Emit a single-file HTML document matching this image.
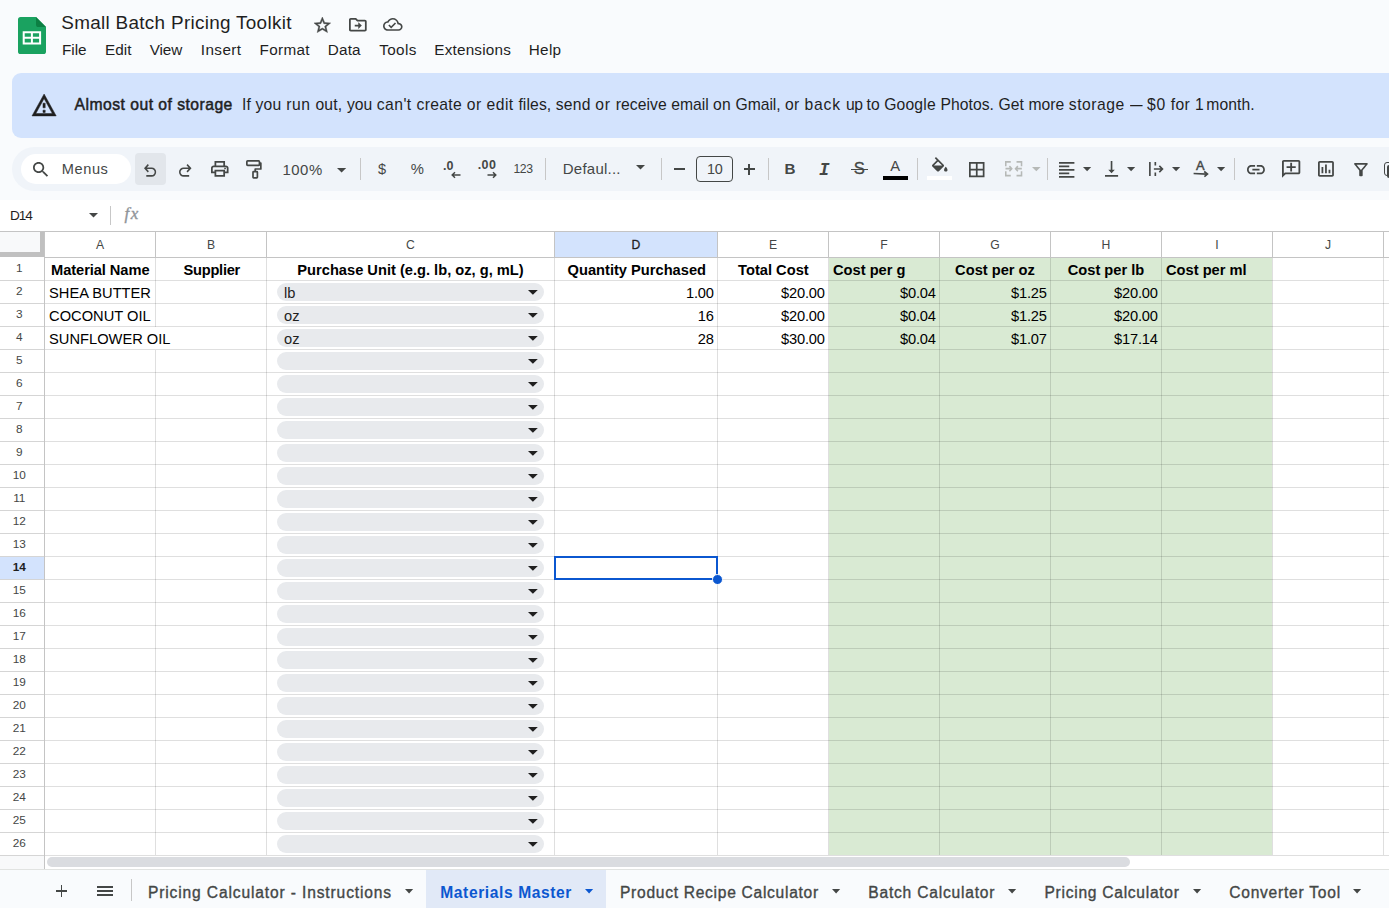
<!DOCTYPE html>
<html lang="en"><head><meta charset="utf-8"><title>Small Batch Pricing Toolkit</title>
<style>
html,body{margin:0;padding:0}
body{width:1389px;height:908px;overflow:hidden;position:relative;background:#f9fbfd;font-family:'Liberation Sans', sans-serif}
.b{position:absolute}
.t{position:absolute;white-space:pre;line-height:1}
.i{position:absolute;overflow:visible}
</style></head><body>
<div class="b" style="left:12px;top:73px;width:1400px;height:65px;background:#d3e3fd;border-radius:9px 0 0 9px;"></div>
<div class="b" style="left:12px;top:147px;width:1400px;height:44px;background:#f0f4f9;border-radius:22px 0 0 22px;"></div>
<div class="b" style="left:21px;top:154px;width:110px;height:30px;background:#fff;border-radius:15px;"></div>
<div class="b" style="left:135px;top:153px;width:31px;height:32px;background:#e2e6eb;border-radius:4px;"></div>
<div class="b" style="left:360px;top:158px;width:1px;height:22px;background:#c7c7c7;"></div>
<div class="b" style="left:545px;top:158px;width:1px;height:22px;background:#c7c7c7;"></div>
<div class="b" style="left:661px;top:158px;width:1px;height:22px;background:#c7c7c7;"></div>
<div class="b" style="left:768px;top:158px;width:1px;height:22px;background:#c7c7c7;"></div>
<div class="b" style="left:917px;top:158px;width:1px;height:22px;background:#c7c7c7;"></div>
<div class="b" style="left:1047px;top:158px;width:1px;height:22px;background:#c7c7c7;"></div>
<div class="b" style="left:1234px;top:158px;width:1px;height:22px;background:#c7c7c7;"></div>
<div class="b" style="left:696px;top:156px;width:37px;height:26px;background:transparent;border:1px solid #444746;border-radius:4px;box-sizing:border-box;"></div>
<div class="b" style="left:883px;top:176px;width:25px;height:4px;background:#000;"></div>
<div class="b" style="left:927px;top:176px;width:25px;height:4px;background:#fff;"></div>
<div class="b" style="left:0px;top:200px;width:1389px;height:31px;background:#fff;"></div>
<div class="b" style="left:110px;top:206px;width:1px;height:19px;background:#c7c7c7;"></div>
<div class="b" style="left:0px;top:231px;width:1389px;height:638px;background:#fff;"></div>
<div class="b" style="left:829px;top:258px;width:443px;height:597px;background:#d9ead3;"></div>
<div class="b" style="left:555px;top:232px;width:162px;height:25px;background:#d3e3fd;"></div>
<div class="b" style="left:0px;top:557px;width:44px;height:22px;background:#d3e3fd;"></div>
<div class="b" style="left:0px;top:232px;width:40px;height:20px;background:#f8f9fa;"></div>
<div class="b" style="left:40px;top:232px;width:4px;height:25px;background:#c0c0c0;"></div>
<div class="b" style="left:0px;top:252px;width:44px;height:5px;background:#c0c0c0;"></div>
<div class="b" style="left:277px;top:283px;width:267px;height:18px;background:#e8eaed;border-radius:9px;"></div>
<div class="b" style="left:277px;top:306px;width:267px;height:18px;background:#e8eaed;border-radius:9px;"></div>
<div class="b" style="left:277px;top:329px;width:267px;height:18px;background:#e8eaed;border-radius:9px;"></div>
<div class="b" style="left:277px;top:352px;width:267px;height:18px;background:#e8eaed;border-radius:9px;"></div>
<div class="b" style="left:277px;top:375px;width:267px;height:18px;background:#e8eaed;border-radius:9px;"></div>
<div class="b" style="left:277px;top:398px;width:267px;height:18px;background:#e8eaed;border-radius:9px;"></div>
<div class="b" style="left:277px;top:421px;width:267px;height:18px;background:#e8eaed;border-radius:9px;"></div>
<div class="b" style="left:277px;top:444px;width:267px;height:18px;background:#e8eaed;border-radius:9px;"></div>
<div class="b" style="left:277px;top:467px;width:267px;height:18px;background:#e8eaed;border-radius:9px;"></div>
<div class="b" style="left:277px;top:490px;width:267px;height:18px;background:#e8eaed;border-radius:9px;"></div>
<div class="b" style="left:277px;top:513px;width:267px;height:18px;background:#e8eaed;border-radius:9px;"></div>
<div class="b" style="left:277px;top:536px;width:267px;height:18px;background:#e8eaed;border-radius:9px;"></div>
<div class="b" style="left:277px;top:559px;width:267px;height:18px;background:#e8eaed;border-radius:9px;"></div>
<div class="b" style="left:277px;top:582px;width:267px;height:18px;background:#e8eaed;border-radius:9px;"></div>
<div class="b" style="left:277px;top:605px;width:267px;height:18px;background:#e8eaed;border-radius:9px;"></div>
<div class="b" style="left:277px;top:628px;width:267px;height:18px;background:#e8eaed;border-radius:9px;"></div>
<div class="b" style="left:277px;top:651px;width:267px;height:18px;background:#e8eaed;border-radius:9px;"></div>
<div class="b" style="left:277px;top:674px;width:267px;height:18px;background:#e8eaed;border-radius:9px;"></div>
<div class="b" style="left:277px;top:697px;width:267px;height:18px;background:#e8eaed;border-radius:9px;"></div>
<div class="b" style="left:277px;top:720px;width:267px;height:18px;background:#e8eaed;border-radius:9px;"></div>
<div class="b" style="left:277px;top:743px;width:267px;height:18px;background:#e8eaed;border-radius:9px;"></div>
<div class="b" style="left:277px;top:766px;width:267px;height:18px;background:#e8eaed;border-radius:9px;"></div>
<div class="b" style="left:277px;top:789px;width:267px;height:18px;background:#e8eaed;border-radius:9px;"></div>
<div class="b" style="left:277px;top:812px;width:267px;height:18px;background:#e8eaed;border-radius:9px;"></div>
<div class="b" style="left:277px;top:835px;width:267px;height:18px;background:#e8eaed;border-radius:9px;"></div>
<div class="b" style="left:0px;top:231px;width:1389px;height:1px;background:#c4c4c4;"></div>
<div class="b" style="left:44px;top:257px;width:1345px;height:1px;background:#c4c4c4;"></div>
<div class="b" style="left:45px;top:280px;width:1344px;height:1px;background:rgba(0,0,0,.125);"></div>
<div class="b" style="left:0px;top:280px;width:44px;height:1px;background:#d5d5d5;"></div>
<div class="b" style="left:45px;top:303px;width:1344px;height:1px;background:rgba(0,0,0,.125);"></div>
<div class="b" style="left:0px;top:303px;width:44px;height:1px;background:#d5d5d5;"></div>
<div class="b" style="left:45px;top:326px;width:1344px;height:1px;background:rgba(0,0,0,.125);"></div>
<div class="b" style="left:0px;top:326px;width:44px;height:1px;background:#d5d5d5;"></div>
<div class="b" style="left:45px;top:349px;width:1344px;height:1px;background:rgba(0,0,0,.125);"></div>
<div class="b" style="left:0px;top:349px;width:44px;height:1px;background:#d5d5d5;"></div>
<div class="b" style="left:45px;top:372px;width:1344px;height:1px;background:rgba(0,0,0,.125);"></div>
<div class="b" style="left:0px;top:372px;width:44px;height:1px;background:#d5d5d5;"></div>
<div class="b" style="left:45px;top:395px;width:1344px;height:1px;background:rgba(0,0,0,.125);"></div>
<div class="b" style="left:0px;top:395px;width:44px;height:1px;background:#d5d5d5;"></div>
<div class="b" style="left:45px;top:418px;width:1344px;height:1px;background:rgba(0,0,0,.125);"></div>
<div class="b" style="left:0px;top:418px;width:44px;height:1px;background:#d5d5d5;"></div>
<div class="b" style="left:45px;top:441px;width:1344px;height:1px;background:rgba(0,0,0,.125);"></div>
<div class="b" style="left:0px;top:441px;width:44px;height:1px;background:#d5d5d5;"></div>
<div class="b" style="left:45px;top:464px;width:1344px;height:1px;background:rgba(0,0,0,.125);"></div>
<div class="b" style="left:0px;top:464px;width:44px;height:1px;background:#d5d5d5;"></div>
<div class="b" style="left:45px;top:487px;width:1344px;height:1px;background:rgba(0,0,0,.125);"></div>
<div class="b" style="left:0px;top:487px;width:44px;height:1px;background:#d5d5d5;"></div>
<div class="b" style="left:45px;top:510px;width:1344px;height:1px;background:rgba(0,0,0,.125);"></div>
<div class="b" style="left:0px;top:510px;width:44px;height:1px;background:#d5d5d5;"></div>
<div class="b" style="left:45px;top:533px;width:1344px;height:1px;background:rgba(0,0,0,.125);"></div>
<div class="b" style="left:0px;top:533px;width:44px;height:1px;background:#d5d5d5;"></div>
<div class="b" style="left:45px;top:556px;width:1344px;height:1px;background:rgba(0,0,0,.125);"></div>
<div class="b" style="left:0px;top:556px;width:44px;height:1px;background:#d5d5d5;"></div>
<div class="b" style="left:45px;top:579px;width:1344px;height:1px;background:rgba(0,0,0,.125);"></div>
<div class="b" style="left:0px;top:579px;width:44px;height:1px;background:#d5d5d5;"></div>
<div class="b" style="left:45px;top:602px;width:1344px;height:1px;background:rgba(0,0,0,.125);"></div>
<div class="b" style="left:0px;top:602px;width:44px;height:1px;background:#d5d5d5;"></div>
<div class="b" style="left:45px;top:625px;width:1344px;height:1px;background:rgba(0,0,0,.125);"></div>
<div class="b" style="left:0px;top:625px;width:44px;height:1px;background:#d5d5d5;"></div>
<div class="b" style="left:45px;top:648px;width:1344px;height:1px;background:rgba(0,0,0,.125);"></div>
<div class="b" style="left:0px;top:648px;width:44px;height:1px;background:#d5d5d5;"></div>
<div class="b" style="left:45px;top:671px;width:1344px;height:1px;background:rgba(0,0,0,.125);"></div>
<div class="b" style="left:0px;top:671px;width:44px;height:1px;background:#d5d5d5;"></div>
<div class="b" style="left:45px;top:694px;width:1344px;height:1px;background:rgba(0,0,0,.125);"></div>
<div class="b" style="left:0px;top:694px;width:44px;height:1px;background:#d5d5d5;"></div>
<div class="b" style="left:45px;top:717px;width:1344px;height:1px;background:rgba(0,0,0,.125);"></div>
<div class="b" style="left:0px;top:717px;width:44px;height:1px;background:#d5d5d5;"></div>
<div class="b" style="left:45px;top:740px;width:1344px;height:1px;background:rgba(0,0,0,.125);"></div>
<div class="b" style="left:0px;top:740px;width:44px;height:1px;background:#d5d5d5;"></div>
<div class="b" style="left:45px;top:763px;width:1344px;height:1px;background:rgba(0,0,0,.125);"></div>
<div class="b" style="left:0px;top:763px;width:44px;height:1px;background:#d5d5d5;"></div>
<div class="b" style="left:45px;top:786px;width:1344px;height:1px;background:rgba(0,0,0,.125);"></div>
<div class="b" style="left:0px;top:786px;width:44px;height:1px;background:#d5d5d5;"></div>
<div class="b" style="left:45px;top:809px;width:1344px;height:1px;background:rgba(0,0,0,.125);"></div>
<div class="b" style="left:0px;top:809px;width:44px;height:1px;background:#d5d5d5;"></div>
<div class="b" style="left:45px;top:832px;width:1344px;height:1px;background:rgba(0,0,0,.125);"></div>
<div class="b" style="left:0px;top:832px;width:44px;height:1px;background:#d5d5d5;"></div>
<div class="b" style="left:45px;top:855px;width:1344px;height:1px;background:rgba(0,0,0,.125);"></div>
<div class="b" style="left:0px;top:855px;width:44px;height:1px;background:#d5d5d5;"></div>
<div class="b" style="left:44px;top:232px;width:1px;height:25px;background:#c4c4c4;"></div>
<div class="b" style="left:44px;top:258px;width:1px;height:611px;background:#c4c4c4;"></div>
<div class="b" style="left:155px;top:232px;width:1px;height:25px;background:#c4c4c4;"></div>
<div class="b" style="left:155px;top:258px;width:1px;height:69px;background:rgba(0,0,0,.125);"></div>
<div class="b" style="left:155px;top:350px;width:1px;height:505px;background:rgba(0,0,0,.125);"></div>
<div class="b" style="left:266px;top:232px;width:1px;height:25px;background:#c4c4c4;"></div>
<div class="b" style="left:266px;top:258px;width:1px;height:597px;background:rgba(0,0,0,.125);"></div>
<div class="b" style="left:554px;top:232px;width:1px;height:25px;background:#c4c4c4;"></div>
<div class="b" style="left:554px;top:258px;width:1px;height:597px;background:rgba(0,0,0,.125);"></div>
<div class="b" style="left:717px;top:232px;width:1px;height:25px;background:#c4c4c4;"></div>
<div class="b" style="left:717px;top:258px;width:1px;height:597px;background:rgba(0,0,0,.125);"></div>
<div class="b" style="left:828px;top:232px;width:1px;height:25px;background:#c4c4c4;"></div>
<div class="b" style="left:828px;top:258px;width:1px;height:597px;background:rgba(0,0,0,.125);"></div>
<div class="b" style="left:939px;top:232px;width:1px;height:25px;background:#c4c4c4;"></div>
<div class="b" style="left:939px;top:258px;width:1px;height:597px;background:rgba(0,0,0,.125);"></div>
<div class="b" style="left:1050px;top:232px;width:1px;height:25px;background:#c4c4c4;"></div>
<div class="b" style="left:1050px;top:258px;width:1px;height:597px;background:rgba(0,0,0,.125);"></div>
<div class="b" style="left:1161px;top:232px;width:1px;height:25px;background:#c4c4c4;"></div>
<div class="b" style="left:1161px;top:258px;width:1px;height:597px;background:rgba(0,0,0,.125);"></div>
<div class="b" style="left:1272px;top:232px;width:1px;height:25px;background:#c4c4c4;"></div>
<div class="b" style="left:1272px;top:258px;width:1px;height:597px;background:rgba(0,0,0,.125);"></div>
<div class="b" style="left:1383px;top:232px;width:1px;height:25px;background:#c4c4c4;"></div>
<div class="b" style="left:1383px;top:258px;width:1px;height:597px;background:rgba(0,0,0,.125);"></div>
<div class="b" style="left:0px;top:856px;width:44px;height:13px;background:#f8f9fa;"></div>
<div class="b" style="left:47px;top:857.3px;width:1083.3px;height:9.3px;background:#dadce0;border-radius:5px;"></div>
<div class="b" style="left:0px;top:869px;width:1389px;height:39px;background:#f9fbfd;"></div>
<div class="b" style="left:0px;top:869px;width:1389px;height:1px;background:#e1e3e1;"></div>
<div class="b" style="left:426px;top:870px;width:180px;height:38px;background:#e1e9f7;"></div>
<div class="b" style="left:131px;top:879px;width:1px;height:22px;background:#c7c7c7;"></div>
<div class="b" style="left:554px;top:556px;width:164px;height:24px;background:transparent;border:2px solid #0b57d0;box-sizing:border-box;"></div>
<div class="b" style="left:713px;top:575px;width:9px;height:9px;background:#0b57d0;border-radius:50%;border:1px solid #fff;box-sizing:content-box;margin:-1px;"></div>
<svg class="i" style="left:18px;top:17px" width="28" height="37" viewBox="0 0 28 37">
<path d="M2.6 0H18L28 10V34.4a2.6 2.6 0 0 1-2.6 2.6H2.6A2.6 2.6 0 0 1 0 34.4V2.6A2.6 2.6 0 0 1 2.6 0z" fill="#1aa260"/>
<path d="M18 0L28 10H20.6A2.6 2.6 0 0 1 18 7.4z" fill="#0c8043"/>
<path d="M4.7 14.2h18.4v13.2H4.7zM6.7 16.2v3.6h6.2v-3.6zM14.9 16.2v3.6h6.2v-3.6zM6.7 21.8v3.6h6.2v-3.6zM14.9 21.8v3.6h6.2v-3.6z" fill="#fff" fill-rule="evenodd"/>
</svg>
<svg class="i" style="left:314.20px;top:16.90px" width="16.70" height="15.60" viewBox="2 2 20 19" preserveAspectRatio="none" fill="#444746" ><path stroke="#444746" stroke-width=".5" d="M22 9.24l-7.19-.62L12 2 9.19 8.63 2 9.24l5.46 4.73L5.82 21 12 17.27 18.18 21l-1.63-7.03L22 9.24zM12 15.4l-3.76 2.27 1-4.28-3.32-2.88 4.38-.38L12 6.1l1.71 4.04 4.38.38-3.32 2.88 1 4.28L12 15.4z" fill-rule="evenodd"/></svg>
<svg class="i" style="left:349.20px;top:17.90px" width="17.70" height="13.50" viewBox="2 4 20 16" preserveAspectRatio="none" fill="#444746" ><path d="M20 6h-8l-2-2H4c-1.1 0-2 .9-2 2v12c0 1.1.9 2 2 2h16c1.1 0 2-.9 2-2V8c0-1.1-.9-2-2-2zm0 12H4V6h5.17l2 2H20v10zm-7.5-1l4-4-4-4v3H8.5v2h4v3z" fill-rule="evenodd"/></svg>
<svg class="i" style="left:383.00px;top:18.30px" width="19.60" height="12.80" viewBox="0 4 24 16" preserveAspectRatio="none" fill="#444746" ><path d="M19.35 10.04C18.67 6.59 15.64 4 12 4 9.11 4 6.6 5.64 5.35 8.04 2.34 8.36 0 10.91 0 14c0 3.31 2.69 6 6 6h13c2.76 0 5-2.24 5-5 0-2.64-2.05-4.78-4.65-4.96zM19 18H6c-2.21 0-4-1.79-4-4 0-2.05 1.53-3.76 3.56-3.97l1.07-.11.5-.95C8.08 7.14 9.94 6 12 6c2.62 0 4.88 1.86 5.39 4.43l.3 1.5 1.53.11c1.56.1 2.78 1.41 2.78 2.96 0 1.65-1.35 3-3 3zm-9-3.82l-2.09-2.09L6.5 13.5 10 17l6.01-6.01-1.41-1.41z" fill-rule="evenodd"/></svg>
<svg class="i" style="left:31.60px;top:93.90px" width="24.20" height="21.90" viewBox="1 2 22 19" preserveAspectRatio="none" fill="#1f1f1f" ><path stroke="#1f1f1f" stroke-width=".45" stroke-linejoin="round" d="M12 5.99L19.53 19H4.47L12 5.99M12 2L1 21h22L12 2zm1 14h-2v2h2v-2zm0-6h-2v4h2v-4z" fill-rule="evenodd"/></svg>
<svg class="i" style="left:33.20px;top:162.10px" width="15.10" height="14.80" viewBox="3 3 17.49 17.49" preserveAspectRatio="none" fill="#444746" ><path d="M15.5 14h-.79l-.28-.27C15.41 12.59 16 11.11 16 9.5 16 5.91 13.09 3 9.5 3S3 5.91 3 9.5 5.91 16 9.5 16c1.61 0 3.09-.59 4.23-1.57l.27.28v.79l5 4.99L20.49 19l-4.99-5zm-6 0C7.01 14 5 11.99 5 9.5S7.01 5 9.5 5 14 7.01 14 9.5 11.99 14 9.5 14z" fill-rule="evenodd"/></svg>
<svg class="i" style="left:144.00px;top:163.50px" width="12.20" height="12.75" viewBox="4 4 16 15" preserveAspectRatio="none" fill="#444746" ><path d="M7 19v-2h7.1q1.575 0 2.738-1T18 13.5 16.838 11 14.1 10H7.8l2.6 2.6L9 14 4 9l5-5 1.4 1.4L7.8 8h6.3q2.425 0 4.163 1.575T20 13.5t-1.737 3.925T14.1 19z"/></svg>
<svg class="i" style="left:179.00px;top:163.50px" width="12.50" height="12.75" viewBox="4 4 16 15" preserveAspectRatio="none" fill="#444746" ><path d="M9.9 19q-2.425 0-4.163-1.575T4 13.5t1.737-3.925T9.9 8h6.3l-2.6-2.6L15 4l5 5-5 5-1.4-1.4 2.6-2.6H9.9q-1.575 0-2.738 1T6 13.5 7.163 16 9.9 17H17v2z"/></svg>
<svg class="i" style="left:211.20px;top:161.10px" width="17.55" height="15.75" viewBox="2 3 20 18" preserveAspectRatio="none" fill="#444746" ><path d="M19 8h-1V3H6v5H5c-1.66 0-3 1.34-3 3v6h4v4h12v-4h4v-6c0-1.66-1.34-3-3-3zM8 5h8v3H8V5zm8 14H8v-4h8v4zm2-4v-2H6v2H4v-4c0-.55.45-1 1-1h14c.55 0 1 .45 1 1v4h-2z" fill-rule="evenodd"/><circle cx="18" cy="11.5" r="1"/></svg>
<svg class="i" style="left:246.3px;top:160.1px" width="15.7" height="18.8" viewBox="0 0 15.7 18.8" fill="none" stroke="#444746" stroke-width="1.7" stroke-linejoin="round"><rect x=".85" y=".85" width="12.6" height="4.5" rx=".8"/><path d="M13.45 3.1h1.4v5.9H9.2v2.6"/><rect x="7" y="11.7" width="4.4" height="6.25" rx=".6"/></svg>
<svg class="i" style="left:337.40px;top:167.70px" width="9.2" height="4.6" viewBox="0 0 10 5" fill="#444746" preserveAspectRatio="none"><path d="M0 0h10L5 5z"/></svg>
<svg class="i" style="left:451px;top:171px" width="10" height="8" viewBox="0 0 10 8" fill="none" stroke="#444746" stroke-width="1.5"><path d="M9.5 4H1.2M4 1.2L1.2 4 4 6.8"/></svg>
<svg class="i" style="left:487px;top:171px" width="10" height="8" viewBox="0 0 10 8" fill="none" stroke="#444746" stroke-width="1.5"><path d="M0.5 4h8.3M6 1.2L8.8 4 6 6.8"/></svg>
<svg class="i" style="left:636.30px;top:165.40px" width="9" height="4.6" viewBox="0 0 10 5" fill="#444746" preserveAspectRatio="none"><path d="M0 0h10L5 5z"/></svg>
<div class="b" style="left:673.7px;top:168.4px;width:11.1px;height:1.7px;background:#444746"></div>
<div class="b" style="left:743.6px;top:168.4px;width:11.4px;height:1.7px;background:#444746"></div>
<div class="b" style="left:748.45px;top:163.5px;width:1.7px;height:11.4px;background:#444746"></div>
<div class="b" style="left:850.6px;top:168.6px;width:17.6px;height:1.6px;background:#444746"></div>
<svg class="i" style="left:931.90px;top:157.00px" width="15.50" height="14.60" viewBox="3 0 18 17" preserveAspectRatio="none" fill="#444746" ><path d="M16.56 8.94L7.62 0 6.21 1.41l2.38 2.38-5.15 5.15c-.59.59-.59 1.54 0 2.12l5.5 5.5c.29.29.68.44 1.06.44s.77-.15 1.06-.44l5.5-5.5c.59-.58.59-1.53 0-2.12zM5.21 10L10 5.21 14.79 10H5.21zM19 11.5s-2 2.17-2 3.5c0 1.1.9 2 2 2s2-.9 2-2c0-1.33-2-3.5-2-3.5z" fill-rule="evenodd"/></svg>
<svg class="i" style="left:969.20px;top:161.50px" width="15.50" height="15.20" viewBox="3 3 18 18" preserveAspectRatio="none" fill="#444746" ><path d="M3 3v18h18V3H3zm8 16H5v-6h6v6zm0-8H5V5h6v6zm8 8h-6v-6h6v6zm0-8h-6V5h6v6z" fill-rule="evenodd"/></svg>
<svg class="i" style="left:1004.6px;top:161.3px" width="17.3" height="15.4" viewBox="0 0 18 15" preserveAspectRatio="none" fill="none" stroke="#b6b9b7" stroke-width="1.6"><path d="M6 .8H.8V5M.8 10v4.2H6M12 .8h5.2V5M17.2 10v4.2H12M.5 7.5H7M4.6 5L7 7.5 4.6 10M17.5 7.5H11M13.4 5L11 7.5l2.4 2.5"/></svg>
<svg class="i" style="left:1031.50px;top:166.55px" width="8.6" height="4.3" viewBox="0 0 10 5" fill="#b6b9b7" preserveAspectRatio="none"><path d="M0 0h10L5 5z"/></svg>
<svg class="i" style="left:1059.30px;top:161.70px" width="15.40" height="15.80" viewBox="3 3 18 18" preserveAspectRatio="none" fill="#444746" ><path d="M15 15H3v2h12v-2zm0-8H3v2h12V7zM3 13h18v-2H3v2zm0 8h18v-2H3v2zM3 3v2h18V3H3z"/></svg>
<svg class="i" style="left:1082.90px;top:166.90px" width="8.2" height="4.2" viewBox="0 0 10 5" fill="#444746" preserveAspectRatio="none"><path d="M0 0h10L5 5z"/></svg>
<svg class="i" style="left:1105.30px;top:161.30px" width="13.10" height="15.70" viewBox="4 3 16 18" preserveAspectRatio="none" fill="#444746" ><path d="M16 13h-3V3h-2v10H8l4 4 4-4zM4 19v2h16v-2H4z"/></svg>
<svg class="i" style="left:1126.90px;top:166.90px" width="8.2" height="4.2" viewBox="0 0 10 5" fill="#444746" preserveAspectRatio="none"><path d="M0 0h10L5 5z"/></svg>
<svg class="i" style="left:1148.5px;top:162px" width="14.6" height="14" viewBox="0 0 15 14" preserveAspectRatio="none" fill="none" stroke="#444746" stroke-width="1.7"><path d="M.9 0v14M6.5 0v3.6M6.5 10.4V14M5 7h8.6M10.6 3.9L13.8 7l-3.2 3.1"/></svg>
<svg class="i" style="left:1171.90px;top:166.90px" width="8.2" height="4.2" viewBox="0 0 10 5" fill="#444746" preserveAspectRatio="none"><path d="M0 0h10L5 5z"/></svg>
<svg class="i" style="left:1193px;top:170px" width="16" height="8" viewBox="0 0 16 8" fill="none" stroke="#444746" stroke-width="1.6"><path d="M.6 3.5L13.8 4.1"/><path d="M11.2 1.5L14.5 4.1 11.4 6.7"/></svg>
<svg class="i" style="left:1216.90px;top:166.90px" width="8.2" height="4.2" viewBox="0 0 10 5" fill="#444746" preserveAspectRatio="none"><path d="M0 0h10L5 5z"/></svg>
<svg class="i" style="left:1246.50px;top:164.60px" width="17.90" height="9.30" viewBox="2 7 20 10" preserveAspectRatio="none" fill="#444746" ><path d="M3.9 12c0-1.71 1.39-3.1 3.1-3.1h4V7H7c-2.76 0-5 2.24-5 5s2.24 5 5 5h4v-1.9H7c-1.71 0-3.1-1.39-3.1-3.1zM8 13h8v-2H8v2zm9-6h-4v1.9h4c1.71 0 3.1 1.39 3.1 3.1s-1.39 3.1-3.1 3.1h-4V17h4c2.76 0 5-2.24 5-5s-2.24-5-5-5z"/></svg>
<svg class="i" style="left:1281.70px;top:160.00px" width="18.30" height="17.70" viewBox="2 2 20 20" preserveAspectRatio="none" fill="#444746" ><g transform="translate(24,0) scale(-1,1)"><path d="M22 4c0-1.1-.9-2-2-2H4c-1.1 0-2 .9-2 2v12c0 1.1.9 2 2 2h14l4 4V4zm-2 13.17L18.83 16H4V4h16v13.17zM13 5h-2v4H7v2h4v4h2v-4h4V9h-4z" fill-rule="evenodd"/></g></svg>
<svg class="i" style="left:1317.60px;top:161.30px" width="15.90" height="15.70" viewBox="3 3 18 18" preserveAspectRatio="none" fill="#444746" ><path d="M9 17H7v-7h2v7zm4 0h-2V7h2v10zm4 0h-2v-4h2v4zm2 2H5V5h14v14zm0-16H5c-1.1 0-2 .9-2 2v14c0 1.1.9 2 2 2h14c1.1 0 2-.9 2-2V5c0-1.1-.9-2-2-2z" fill-rule="evenodd"/></svg>
<svg class="i" style="left:1354.00px;top:162.60px" width="13.90" height="13.30" viewBox="4 4 16 16" preserveAspectRatio="none" fill="#444746" ><path d="M7 6h10l-5.01 6.3L7 6zm-2.75-.39C6.27 8.2 10 13 10 13v6c0 .55.45 1 1 1h2c.55 0 1-.45 1-1v-6s3.72-4.8 5.74-7.39c.51-.66.04-1.61-.79-1.61H5.04c-.83 0-1.3.95-.79 1.61z" fill-rule="evenodd"/></svg>
<div class="b" style="left:1384px;top:161.5px;width:20px;height:14px;border:1.7px solid #444746;border-radius:3px;box-sizing:border-box"></div>
<div class="b" style="left:1387px;top:165px;width:20px;height:12.5px;background:#444746;border-radius:2px"></div>
<svg class="i" style="left:88.60px;top:212.70px" width="9" height="4.6" viewBox="0 0 10 5" fill="#444746" preserveAspectRatio="none"><path d="M0 0h10L5 5z"/></svg>
<svg class="i" style="left:527.60px;top:289.50px" width="9.8" height="4.8" viewBox="0 0 10 5" fill="#1f1f1f" preserveAspectRatio="none"><path d="M0 0h10L5 5z"/></svg>
<svg class="i" style="left:527.60px;top:312.50px" width="9.8" height="4.8" viewBox="0 0 10 5" fill="#1f1f1f" preserveAspectRatio="none"><path d="M0 0h10L5 5z"/></svg>
<svg class="i" style="left:527.60px;top:335.50px" width="9.8" height="4.8" viewBox="0 0 10 5" fill="#1f1f1f" preserveAspectRatio="none"><path d="M0 0h10L5 5z"/></svg>
<svg class="i" style="left:527.60px;top:358.50px" width="9.8" height="4.8" viewBox="0 0 10 5" fill="#1f1f1f" preserveAspectRatio="none"><path d="M0 0h10L5 5z"/></svg>
<svg class="i" style="left:527.60px;top:381.50px" width="9.8" height="4.8" viewBox="0 0 10 5" fill="#1f1f1f" preserveAspectRatio="none"><path d="M0 0h10L5 5z"/></svg>
<svg class="i" style="left:527.60px;top:404.50px" width="9.8" height="4.8" viewBox="0 0 10 5" fill="#1f1f1f" preserveAspectRatio="none"><path d="M0 0h10L5 5z"/></svg>
<svg class="i" style="left:527.60px;top:427.50px" width="9.8" height="4.8" viewBox="0 0 10 5" fill="#1f1f1f" preserveAspectRatio="none"><path d="M0 0h10L5 5z"/></svg>
<svg class="i" style="left:527.60px;top:450.50px" width="9.8" height="4.8" viewBox="0 0 10 5" fill="#1f1f1f" preserveAspectRatio="none"><path d="M0 0h10L5 5z"/></svg>
<svg class="i" style="left:527.60px;top:473.50px" width="9.8" height="4.8" viewBox="0 0 10 5" fill="#1f1f1f" preserveAspectRatio="none"><path d="M0 0h10L5 5z"/></svg>
<svg class="i" style="left:527.60px;top:496.50px" width="9.8" height="4.8" viewBox="0 0 10 5" fill="#1f1f1f" preserveAspectRatio="none"><path d="M0 0h10L5 5z"/></svg>
<svg class="i" style="left:527.60px;top:519.50px" width="9.8" height="4.8" viewBox="0 0 10 5" fill="#1f1f1f" preserveAspectRatio="none"><path d="M0 0h10L5 5z"/></svg>
<svg class="i" style="left:527.60px;top:542.50px" width="9.8" height="4.8" viewBox="0 0 10 5" fill="#1f1f1f" preserveAspectRatio="none"><path d="M0 0h10L5 5z"/></svg>
<svg class="i" style="left:527.60px;top:565.50px" width="9.8" height="4.8" viewBox="0 0 10 5" fill="#1f1f1f" preserveAspectRatio="none"><path d="M0 0h10L5 5z"/></svg>
<svg class="i" style="left:527.60px;top:588.50px" width="9.8" height="4.8" viewBox="0 0 10 5" fill="#1f1f1f" preserveAspectRatio="none"><path d="M0 0h10L5 5z"/></svg>
<svg class="i" style="left:527.60px;top:611.50px" width="9.8" height="4.8" viewBox="0 0 10 5" fill="#1f1f1f" preserveAspectRatio="none"><path d="M0 0h10L5 5z"/></svg>
<svg class="i" style="left:527.60px;top:634.50px" width="9.8" height="4.8" viewBox="0 0 10 5" fill="#1f1f1f" preserveAspectRatio="none"><path d="M0 0h10L5 5z"/></svg>
<svg class="i" style="left:527.60px;top:657.50px" width="9.8" height="4.8" viewBox="0 0 10 5" fill="#1f1f1f" preserveAspectRatio="none"><path d="M0 0h10L5 5z"/></svg>
<svg class="i" style="left:527.60px;top:680.50px" width="9.8" height="4.8" viewBox="0 0 10 5" fill="#1f1f1f" preserveAspectRatio="none"><path d="M0 0h10L5 5z"/></svg>
<svg class="i" style="left:527.60px;top:703.50px" width="9.8" height="4.8" viewBox="0 0 10 5" fill="#1f1f1f" preserveAspectRatio="none"><path d="M0 0h10L5 5z"/></svg>
<svg class="i" style="left:527.60px;top:726.50px" width="9.8" height="4.8" viewBox="0 0 10 5" fill="#1f1f1f" preserveAspectRatio="none"><path d="M0 0h10L5 5z"/></svg>
<svg class="i" style="left:527.60px;top:749.50px" width="9.8" height="4.8" viewBox="0 0 10 5" fill="#1f1f1f" preserveAspectRatio="none"><path d="M0 0h10L5 5z"/></svg>
<svg class="i" style="left:527.60px;top:772.50px" width="9.8" height="4.8" viewBox="0 0 10 5" fill="#1f1f1f" preserveAspectRatio="none"><path d="M0 0h10L5 5z"/></svg>
<svg class="i" style="left:527.60px;top:795.50px" width="9.8" height="4.8" viewBox="0 0 10 5" fill="#1f1f1f" preserveAspectRatio="none"><path d="M0 0h10L5 5z"/></svg>
<svg class="i" style="left:527.60px;top:818.50px" width="9.8" height="4.8" viewBox="0 0 10 5" fill="#1f1f1f" preserveAspectRatio="none"><path d="M0 0h10L5 5z"/></svg>
<svg class="i" style="left:527.60px;top:841.50px" width="9.8" height="4.8" viewBox="0 0 10 5" fill="#1f1f1f" preserveAspectRatio="none"><path d="M0 0h10L5 5z"/></svg>
<svg class="i" style="left:404.90px;top:888.95px" width="8.2" height="4.5" viewBox="0 0 10 5" fill="#444746" preserveAspectRatio="none"><path d="M0 0h10L5 5z"/></svg>
<svg class="i" style="left:584.90px;top:888.95px" width="8.2" height="4.5" viewBox="0 0 10 5" fill="#0b57d0" preserveAspectRatio="none"><path d="M0 0h10L5 5z"/></svg>
<svg class="i" style="left:832.40px;top:888.95px" width="8.2" height="4.5" viewBox="0 0 10 5" fill="#444746" preserveAspectRatio="none"><path d="M0 0h10L5 5z"/></svg>
<svg class="i" style="left:1007.90px;top:888.95px" width="8.2" height="4.5" viewBox="0 0 10 5" fill="#444746" preserveAspectRatio="none"><path d="M0 0h10L5 5z"/></svg>
<svg class="i" style="left:1192.90px;top:888.95px" width="8.2" height="4.5" viewBox="0 0 10 5" fill="#444746" preserveAspectRatio="none"><path d="M0 0h10L5 5z"/></svg>
<svg class="i" style="left:1353.40px;top:888.95px" width="8.2" height="4.5" viewBox="0 0 10 5" fill="#444746" preserveAspectRatio="none"><path d="M0 0h10L5 5z"/></svg>
<div class="b" style="left:55.9px;top:890.25px;width:11.4px;height:1.7px;background:#444746"></div>
<div class="b" style="left:60.75px;top:885.4px;width:1.7px;height:11.4px;background:#444746"></div>
<div class="b" style="left:97px;top:886.3px;width:16.4px;height:1.7px;background:#444746"></div>
<div class="b" style="left:97px;top:890.3px;width:16.4px;height:1.7px;background:#444746"></div>
<div class="b" style="left:97px;top:894.3px;width:16.4px;height:1.7px;background:#444746"></div>
<span class="t" style="top:14.20px;font-size:18.9px;color:#1f1f1f;letter-spacing:0.304px;left:61.30px;">Small Batch Pricing Toolkit</span>
<span class="t" style="top:41.95px;font-size:15.3px;color:#1f1f1f;letter-spacing:-0.073px;left:62.10px;">File</span>
<span class="t" style="top:41.95px;font-size:15.3px;color:#1f1f1f;letter-spacing:0.040px;left:105.00px;">Edit</span>
<span class="t" style="top:41.95px;font-size:15.3px;color:#1f1f1f;letter-spacing:-0.140px;left:149.80px;">View</span>
<span class="t" style="top:41.95px;font-size:15.3px;color:#1f1f1f;letter-spacing:0.406px;left:200.80px;">Insert</span>
<span class="t" style="top:41.95px;font-size:15.3px;color:#1f1f1f;letter-spacing:0.299px;left:259.60px;">Format</span>
<span class="t" style="top:41.95px;font-size:15.3px;color:#1f1f1f;letter-spacing:0.168px;left:327.80px;">Data</span>
<span class="t" style="top:41.95px;font-size:15.3px;color:#1f1f1f;letter-spacing:0.351px;left:379.20px;">Tools</span>
<span class="t" style="top:41.95px;font-size:15.3px;color:#1f1f1f;letter-spacing:0.187px;left:434.30px;">Extensions</span>
<span class="t" style="top:41.95px;font-size:15.3px;color:#1f1f1f;letter-spacing:0.266px;left:528.80px;">Help</span>
<span class="t" style="top:96.71px;font-size:15.7px;color:#1f1f1f;letter-spacing:0.476px;-webkit-text-stroke:0.5px #1f1f1f;left:74.60px;">Almost out of storage</span>
<span class="t" style="top:96.71px;font-size:15.7px;color:#1f1f1f;letter-spacing:0.141px;left:242.00px;">If </span>
<span class="t" style="top:96.71px;font-size:15.7px;color:#1f1f1f;letter-spacing:0.261px;left:255.50px;">you </span>
<span class="t" style="top:96.71px;font-size:15.7px;color:#1f1f1f;letter-spacing:0.538px;left:286.20px;">run </span>
<span class="t" style="top:96.71px;font-size:15.7px;color:#1f1f1f;letter-spacing:0.194px;left:315.40px;">out, </span>
<span class="t" style="top:96.71px;font-size:15.7px;color:#1f1f1f;letter-spacing:0.061px;left:346.90px;">you </span>
<span class="t" style="top:96.71px;font-size:15.7px;color:#1f1f1f;letter-spacing:0.447px;left:376.80px;">can&#x27;t </span>
<span class="t" style="top:96.71px;font-size:15.7px;color:#1f1f1f;letter-spacing:0.319px;left:416.50px;">create </span>
<span class="t" style="top:96.71px;font-size:15.7px;color:#1f1f1f;letter-spacing:0.529px;left:466.70px;">or </span>
<span class="t" style="top:96.71px;font-size:15.7px;color:#1f1f1f;letter-spacing:0.429px;left:486.60px;">edit </span>
<span class="t" style="top:96.71px;font-size:15.7px;color:#1f1f1f;letter-spacing:0.111px;left:518.40px;">files, </span>
<span class="t" style="top:96.71px;font-size:15.7px;color:#1f1f1f;letter-spacing:0.202px;left:555.80px;">send </span>
<span class="t" style="top:96.71px;font-size:15.7px;color:#1f1f1f;letter-spacing:0.762px;left:595.20px;">or </span>
<span class="t" style="top:96.71px;font-size:15.7px;color:#1f1f1f;letter-spacing:0.058px;left:615.80px;">receive </span>
<span class="t" style="top:96.71px;font-size:15.7px;color:#1f1f1f;letter-spacing:0.007px;left:671.20px;">email </span>
<span class="t" style="top:96.71px;font-size:15.7px;color:#1f1f1f;letter-spacing:0.229px;left:713.10px;">on </span>
<span class="t" style="top:96.71px;font-size:15.7px;color:#1f1f1f;letter-spacing:-0.055px;left:735.60px;">Gmail, </span>
<span class="t" style="top:96.71px;font-size:15.7px;color:#1f1f1f;letter-spacing:0.396px;left:784.90px;">or </span>
<span class="t" style="top:96.71px;font-size:15.7px;color:#1f1f1f;letter-spacing:0.820px;left:804.40px;">back </span>
<span class="t" style="top:96.71px;font-size:15.7px;color:#1f1f1f;letter-spacing:-0.404px;left:846.00px;">up </span>
<span class="t" style="top:96.71px;font-size:15.7px;color:#1f1f1f;letter-spacing:0.049px;left:866.60px;">to </span>
<span class="t" style="top:96.71px;font-size:15.7px;color:#1f1f1f;letter-spacing:0.178px;left:884.20px;">Google </span>
<span class="t" style="top:96.71px;font-size:15.7px;color:#1f1f1f;letter-spacing:0.055px;left:940.40px;">Photos. </span>
<span class="t" style="top:96.71px;font-size:15.7px;color:#1f1f1f;letter-spacing:0.086px;left:998.40px;">Get </span>
<span class="t" style="top:96.71px;font-size:15.7px;color:#1f1f1f;letter-spacing:0.058px;left:1028.40px;">more </span>
<span class="t" style="top:96.71px;font-size:15.7px;color:#1f1f1f;letter-spacing:0.502px;left:1068.80px;">storage </span>
<span class="t" style="top:96.71px;font-size:15.7px;color:#1f1f1f;transform:scaleX(0.8);transform-origin:0 0;left:1129.50px;">—</span>
<span class="t" style="top:96.71px;font-size:15.7px;color:#1f1f1f;letter-spacing:0.596px;left:1147.10px;">$0 </span>
<span class="t" style="top:96.71px;font-size:15.7px;color:#1f1f1f;letter-spacing:0.382px;left:1170.70px;">for </span>
<span class="t" style="top:96.71px;font-size:15.7px;color:#1f1f1f;letter-spacing:-0.847px;left:1194.90px;">1 </span>
<span class="t" style="top:96.71px;font-size:15.7px;color:#1f1f1f;letter-spacing:0.053px;left:1206.30px;">month. </span>
<span class="t" style="top:162.14px;font-size:14.6px;color:#444746;letter-spacing:0.575px;left:61.80px;">Menus</span>
<span class="t" style="top:162.99px;font-size:14.9px;color:#444746;letter-spacing:0.516px;left:282.50px;">100%</span>
<span class="t" style="top:162.24px;font-size:14.6px;color:#444746;left:377.90px;">$</span>
<span class="t" style="top:161.67px;font-size:14.8px;color:#444746;left:410.70px;">%</span>
<span class="t" style="top:160.22px;font-size:12.5px;color:#444746;font-weight:700;letter-spacing:0.042px;left:443.00px;">.0</span>
<span class="t" style="top:159.22px;font-size:12.5px;color:#444746;font-weight:700;letter-spacing:0.444px;left:477.70px;">.00</span>
<span class="t" style="top:163.27px;font-size:12.2px;color:#444746;letter-spacing:-0.457px;left:513.50px;">123</span>
<span class="t" style="top:161.10px;font-size:15.0px;color:#444746;letter-spacing:0.226px;left:562.80px;">Defaul...</span>
<span class="t" style="top:161.61px;font-size:14.4px;color:#444746;letter-spacing:-0.344px;left:707.00px;">10</span>
<span class="t" style="top:209.09px;font-size:13.6px;color:#1f1f1f;letter-spacing:-1.015px;left:10.00px;">D14</span>
<span class="t" style="top:205.36px;font-size:17px;color:#8f9499;font-style:italic;font-family:'Liberation Serif', serif;letter-spacing:1.479px;-webkit-text-stroke:0.35px #8f9499;left:124.50px;">fx</span>
<span class="t" style="top:884.69px;font-size:15.6px;color:#444746;letter-spacing:0.859px;-webkit-text-stroke:0.35px #444746;left:147.90px;">Pricing Calculator - Instructions</span>
<span class="t" style="top:884.69px;font-size:15.6px;color:#0b57d0;font-weight:700;letter-spacing:0.596px;left:440.25px;">Materials Master</span>
<span class="t" style="top:884.69px;font-size:15.6px;color:#444746;letter-spacing:0.708px;-webkit-text-stroke:0.35px #444746;left:620.00px;">Product Recipe Calculator</span>
<span class="t" style="top:884.69px;font-size:15.6px;color:#444746;letter-spacing:0.779px;-webkit-text-stroke:0.35px #444746;left:868.30px;">Batch Calculator</span>
<span class="t" style="top:884.69px;font-size:15.6px;color:#444746;letter-spacing:0.720px;-webkit-text-stroke:0.35px #444746;left:1044.50px;">Pricing Calculator</span>
<span class="t" style="top:884.69px;font-size:15.6px;color:#444746;letter-spacing:0.754px;-webkit-text-stroke:0.35px #444746;left:1229.20px;">Converter Tool</span>
<span class="t" style="top:239.17px;font-size:12.2px;color:#444746;left:-100.00px;width:400px;text-align:center;">A</span>
<span class="t" style="top:239.17px;font-size:12.2px;color:#444746;left:11.00px;width:400px;text-align:center;">B</span>
<span class="t" style="top:239.17px;font-size:12.2px;color:#444746;left:210.50px;width:400px;text-align:center;">C</span>
<span class="t" style="top:239.17px;font-size:12.2px;color:#1f1f1f;-webkit-text-stroke:0.3px #1f1f1f;left:436.00px;width:400px;text-align:center;">D</span>
<span class="t" style="top:239.17px;font-size:12.2px;color:#444746;left:573.00px;width:400px;text-align:center;">E</span>
<span class="t" style="top:239.17px;font-size:12.2px;color:#444746;left:684.00px;width:400px;text-align:center;">F</span>
<span class="t" style="top:239.17px;font-size:12.2px;color:#444746;left:795.00px;width:400px;text-align:center;">G</span>
<span class="t" style="top:239.17px;font-size:12.2px;color:#444746;left:906.00px;width:400px;text-align:center;">H</span>
<span class="t" style="top:239.17px;font-size:12.2px;color:#444746;left:1017.00px;width:400px;text-align:center;">I</span>
<span class="t" style="top:239.17px;font-size:12.2px;color:#444746;left:1128.00px;width:400px;text-align:center;">J</span>
<span class="t" style="top:263.21px;font-size:11.8px;color:#444746;left:-180.70px;width:400px;text-align:center;">1</span>
<span class="t" style="top:286.21px;font-size:11.8px;color:#444746;left:-180.70px;width:400px;text-align:center;">2</span>
<span class="t" style="top:309.21px;font-size:11.8px;color:#444746;left:-180.70px;width:400px;text-align:center;">3</span>
<span class="t" style="top:332.21px;font-size:11.8px;color:#444746;left:-180.70px;width:400px;text-align:center;">4</span>
<span class="t" style="top:355.21px;font-size:11.8px;color:#444746;left:-180.70px;width:400px;text-align:center;">5</span>
<span class="t" style="top:378.21px;font-size:11.8px;color:#444746;left:-180.70px;width:400px;text-align:center;">6</span>
<span class="t" style="top:401.21px;font-size:11.8px;color:#444746;left:-180.70px;width:400px;text-align:center;">7</span>
<span class="t" style="top:424.21px;font-size:11.8px;color:#444746;left:-180.70px;width:400px;text-align:center;">8</span>
<span class="t" style="top:447.21px;font-size:11.8px;color:#444746;left:-180.70px;width:400px;text-align:center;">9</span>
<span class="t" style="top:470.21px;font-size:11.8px;color:#444746;left:-180.70px;width:400px;text-align:center;">10</span>
<span class="t" style="top:493.21px;font-size:11.8px;color:#444746;left:-180.70px;width:400px;text-align:center;">11</span>
<span class="t" style="top:516.21px;font-size:11.8px;color:#444746;left:-180.70px;width:400px;text-align:center;">12</span>
<span class="t" style="top:539.21px;font-size:11.8px;color:#444746;left:-180.70px;width:400px;text-align:center;">13</span>
<span class="t" style="top:562.21px;font-size:11.8px;color:#1f1f1f;font-weight:700;left:-180.70px;width:400px;text-align:center;">14</span>
<span class="t" style="top:585.21px;font-size:11.8px;color:#444746;left:-180.70px;width:400px;text-align:center;">15</span>
<span class="t" style="top:608.21px;font-size:11.8px;color:#444746;left:-180.70px;width:400px;text-align:center;">16</span>
<span class="t" style="top:631.21px;font-size:11.8px;color:#444746;left:-180.70px;width:400px;text-align:center;">17</span>
<span class="t" style="top:654.21px;font-size:11.8px;color:#444746;left:-180.70px;width:400px;text-align:center;">18</span>
<span class="t" style="top:677.21px;font-size:11.8px;color:#444746;left:-180.70px;width:400px;text-align:center;">19</span>
<span class="t" style="top:700.21px;font-size:11.8px;color:#444746;left:-180.70px;width:400px;text-align:center;">20</span>
<span class="t" style="top:723.21px;font-size:11.8px;color:#444746;left:-180.70px;width:400px;text-align:center;">21</span>
<span class="t" style="top:746.21px;font-size:11.8px;color:#444746;left:-180.70px;width:400px;text-align:center;">22</span>
<span class="t" style="top:769.21px;font-size:11.8px;color:#444746;left:-180.70px;width:400px;text-align:center;">23</span>
<span class="t" style="top:792.21px;font-size:11.8px;color:#444746;left:-180.70px;width:400px;text-align:center;">24</span>
<span class="t" style="top:815.21px;font-size:11.8px;color:#444746;left:-180.70px;width:400px;text-align:center;">25</span>
<span class="t" style="top:838.21px;font-size:11.8px;color:#444746;left:-180.70px;width:400px;text-align:center;">26</span>
<span class="t" style="top:262.78px;font-size:14.67px;color:#000;font-weight:700;letter-spacing:-0.079px;left:51.10px;">Material Name</span>
<span class="t" style="top:262.78px;font-size:14.67px;color:#000;font-weight:700;letter-spacing:-0.259px;left:183.50px;">Supplier</span>
<span class="t" style="top:262.78px;font-size:14.67px;color:#000;font-weight:700;left:210.50px;width:400px;text-align:center;">Purchase Unit (e.g. lb, oz, g, mL)</span>
<span class="t" style="top:262.78px;font-size:14.67px;color:#000;font-weight:700;left:436.80px;width:400px;text-align:center;">Quantity Purchased</span>
<span class="t" style="top:262.78px;font-size:14.67px;color:#000;font-weight:700;left:573.40px;width:400px;text-align:center;">Total Cost</span>
<span class="t" style="top:262.78px;font-size:14.67px;color:#000;font-weight:700;left:833.00px;">Cost per g</span>
<span class="t" style="top:262.78px;font-size:14.67px;color:#000;font-weight:700;left:795.00px;width:400px;text-align:center;">Cost per oz</span>
<span class="t" style="top:262.78px;font-size:14.67px;color:#000;font-weight:700;left:906.00px;width:400px;text-align:center;">Cost per lb</span>
<span class="t" style="top:262.78px;font-size:14.67px;color:#000;font-weight:700;left:1166.00px;">Cost per ml</span>
<span class="t" style="top:285.78px;font-size:14.67px;color:#000;left:49.10px;">SHEA BUTTER</span>
<span class="t" style="top:285.78px;font-size:14.67px;color:#1f1f1f;left:284.00px;">lb</span>
<span class="t" style="top:285.78px;font-size:14.67px;color:#000;letter-spacing:-0.200px;right:675.30px;">1.00</span>
<span class="t" style="top:285.78px;font-size:14.67px;color:#000;letter-spacing:-0.200px;right:564.30px;">$20.00</span>
<span class="t" style="top:285.78px;font-size:14.67px;color:#000;letter-spacing:-0.200px;right:453.30px;">$0.04</span>
<span class="t" style="top:285.78px;font-size:14.67px;color:#000;letter-spacing:-0.200px;right:342.30px;">$1.25</span>
<span class="t" style="top:285.78px;font-size:14.67px;color:#000;letter-spacing:-0.200px;right:231.30px;">$20.00</span>
<span class="t" style="top:308.78px;font-size:14.67px;color:#000;left:49.10px;">COCONUT OIL</span>
<span class="t" style="top:308.78px;font-size:14.67px;color:#1f1f1f;left:284.00px;">oz</span>
<span class="t" style="top:308.78px;font-size:14.67px;color:#000;letter-spacing:-0.200px;right:675.30px;">16</span>
<span class="t" style="top:308.78px;font-size:14.67px;color:#000;letter-spacing:-0.200px;right:564.30px;">$20.00</span>
<span class="t" style="top:308.78px;font-size:14.67px;color:#000;letter-spacing:-0.200px;right:453.30px;">$0.04</span>
<span class="t" style="top:308.78px;font-size:14.67px;color:#000;letter-spacing:-0.200px;right:342.30px;">$1.25</span>
<span class="t" style="top:308.78px;font-size:14.67px;color:#000;letter-spacing:-0.200px;right:231.30px;">$20.00</span>
<span class="t" style="top:331.78px;font-size:14.67px;color:#000;left:49.10px;">SUNFLOWER OIL</span>
<span class="t" style="top:331.78px;font-size:14.67px;color:#1f1f1f;left:284.00px;">oz</span>
<span class="t" style="top:331.78px;font-size:14.67px;color:#000;letter-spacing:-0.200px;right:675.30px;">28</span>
<span class="t" style="top:331.78px;font-size:14.67px;color:#000;letter-spacing:-0.200px;right:564.30px;">$30.00</span>
<span class="t" style="top:331.78px;font-size:14.67px;color:#000;letter-spacing:-0.200px;right:453.30px;">$0.04</span>
<span class="t" style="top:331.78px;font-size:14.67px;color:#000;letter-spacing:-0.200px;right:342.30px;">$1.07</span>
<span class="t" style="top:331.78px;font-size:14.67px;color:#000;letter-spacing:-0.200px;right:231.30px;">$17.14</span>
<span class="t" style="top:161.33px;font-size:15.2px;color:#444746;font-weight:700;left:784.50px;">B</span>
<span class="t" style="top:161.78px;font-size:17.5px;color:#444746;font-weight:700;font-style:italic;font-family:'Liberation Mono', monospace;left:624.20px;width:400px;text-align:center;">I</span>
<span class="t" style="top:161.35px;font-size:16.6px;color:#444746;-webkit-text-stroke:0.3px #444746;left:659.40px;width:400px;text-align:center;">S</span>
<span class="t" style="top:159.07px;font-size:14.8px;color:#444746;left:695.20px;width:400px;text-align:center;">A</span>
<span class="t" style="top:159.66px;font-size:12.8px;color:#444746;-webkit-text-stroke:0.45px #444746;left:1000.40px;width:400px;text-align:center;">A</span>
</body></html>
